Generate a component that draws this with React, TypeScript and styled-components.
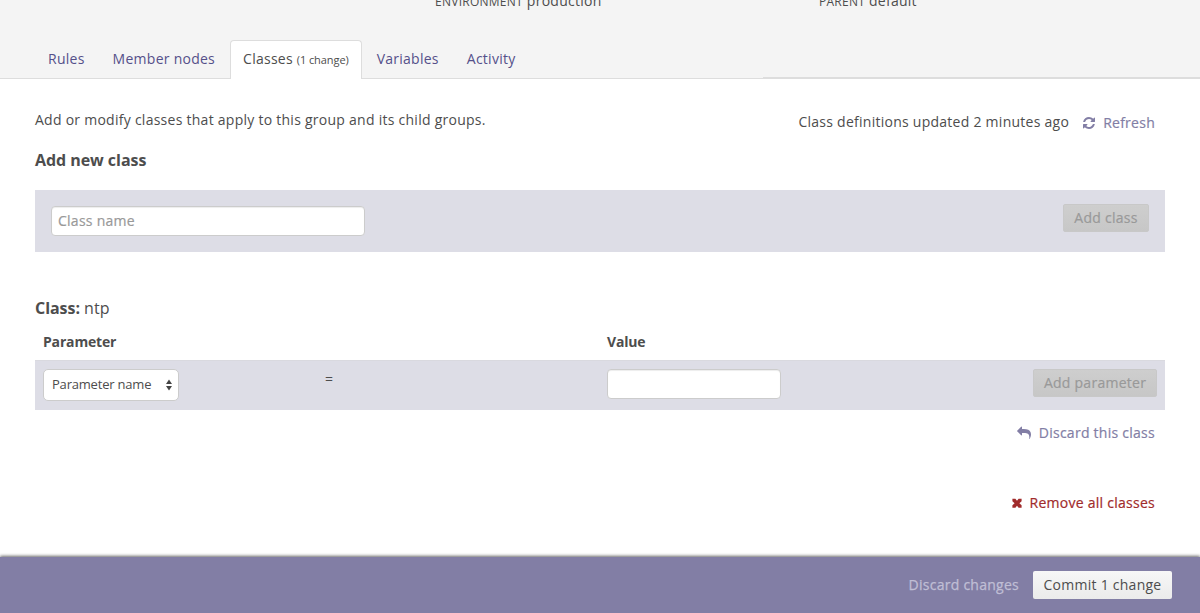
import React from 'react';
import styled, { createGlobalStyle } from 'styled-components';

const GlobalStyle = createGlobalStyle`
  * { box-sizing: border-box; }
  body {
    margin: 0;
    background: #fff;
    color: #4d4d4d;
    font-family: 'Open Sans', sans-serif;
    font-size: 14px;
    line-height: 20px;
    letter-spacing: 0.26px;
    overflow: hidden;
  }
  h2, h3, p { margin: 0; }
  button, input, select { font: inherit; letter-spacing: inherit; }
`;

const Page = styled.div`
  display: flex;
  flex-direction: column;
  height: 613px;
  overflow: hidden;
`;

const Header = styled.header`
  display: flex;
  flex-direction: column;
  height: 79px;
  flex: none;
  background: #f4f4f4;
`;

const Details = styled.div`
  display: grid;
  grid-template-columns: 384px 1fr;
  height: 40px;
  padding-left: 435px;
`;

const Detail = styled.div`
  margin-top: -9px;
`;

const DetailLabel = styled.span`
  font-size: 12px;
`;

const TabBar = styled.nav`
  display: flex;
  height: 39px;
  padding-left: 34px;
  box-shadow: inset 0 -1px #ddd;
`;

const Tab = styled.a<{ $active?: boolean }>`
  height: 39px;
  padding: ${p => (p.$active ? '8px 12px' : '9px 14px')};
  border: ${p => (p.$active ? '1px solid #ddd' : '0')};
  border-bottom: 0;
  border-radius: 4px 4px 0 0;
  background: ${p => (p.$active ? '#fff' : 'transparent')};
  color: ${p => (p.$active ? '#4d4d4d' : '#54508a')};
  margin-left: ${p => (p.$active ? '1px' : '0')};
  margin-right: ${p => (p.$active ? '1px' : '0')};
  white-space: nowrap;
`;

const TabNote = styled.span`
  font-size: 11px;
  letter-spacing: -0.08px;
`;

const TabRule = styled.div`
  align-self: flex-end;
  width: 437px;
  height: 2px;
  margin-left: auto;
  background: #ddd;
`;

const Main = styled.main`
  flex: 1;
  padding: 31px 35px 0;
`;

const Intro = styled.div`
  display: flex;
  justify-content: space-between;
  height: 40px;
`;

const Updated = styled.div`
  display: flex;
  padding: 2px 10px 0 0;
`;

const Action = styled.a<{ $danger?: boolean; $iconGap?: number }>`
  display: flex;
  align-items: center;
  height: 20px;
  color: ${p => (p.$danger ? '#a12b2b' : '#827ea5')};
  -webkit-text-stroke: 0.2px;
  svg { flex: none; margin-right: ${p => p.$iconGap ?? 7}px; }
`;

const RefreshAction = styled(Action)`
  margin: 1px 0 0 13px;
`;

const Title = styled.h2`
  font-size: 16px;
  line-height: 20px;
  font-weight: 700;
  letter-spacing: -0.05px;
`;

const Light = styled.span`
  font-weight: 400;
  letter-spacing: 0.1px;
`;

const AddClassPanel = styled.section`
  display: flex;
  justify-content: space-between;
  height: 62px;
  margin-top: 20px;
  padding: 14px 16px;
  background: #dddde6;
`;

const TextInput = styled.input<{ $width: number }>`
  width: ${p => p.$width}px;
  height: 30px;
  padding: 0 6px 2px;
  border: 1px solid #ccc;
  border-radius: 4px;
  background: #fff;
  box-shadow: inset 0 1px 1px rgba(0, 0, 0, 0.075);
  color: #4d4d4d;
  outline: none;
  &::placeholder { color: #999; opacity: 1; -webkit-text-stroke: 0.2px; }
`;

const ClassNameInput = styled(TextInput)`
  margin-top: 2px;
`;

const Button = styled.button<{ $width: number; $primary?: boolean }>`
  width: ${p => p.$width}px;
  height: 28px;
  padding: 0;
  border: ${p => (p.$primary ? '0' : '1px solid #c8c8c8')};
  border-radius: 2px;
  background: ${p => (p.$primary ? 'linear-gradient(#f7f7f7, #ebebeb)' : 'linear-gradient(#cecece, #c7c7c7)')};
  color: ${p => (p.$primary ? '#4d4d4d' : '#999')};
  -webkit-text-stroke: ${p => (p.$primary ? '0' : '0.2px')};
  white-space: nowrap;
`;

const ClassSection = styled.section`
  margin-top: 46px;
`;

const ColumnHeads = styled.div`
  display: grid;
  grid-template-columns: 564px 1fr;
  height: 42px;
  padding: 14px 8px 0;
  font-weight: 700;
  letter-spacing: -0.17px;
`;

const ParameterRow = styled.div`
  display: grid;
  grid-template-columns: 282px 282px 1fr auto;
  align-items: start;
  height: 50px;
  padding: 8px;
  border-top: 1px solid #d9d9df;
  background: #dddde6;
`;

const Select = styled.button`
  display: flex;
  align-items: center;
  justify-content: space-between;
  width: 136px;
  height: 32px;
  padding: 0 6px 2px 8px;
  border: 1px solid #ccc;
  border-radius: 5px;
  background: #fff;
  color: #4d4d4d;
  font-size: 13px;
  letter-spacing: -0.2px;
  white-space: nowrap;
  svg { margin-top: 2px; }
`;

const ActionRow = styled.div<{ $gap: number }>`
  display: flex;
  justify-content: flex-end;
  margin-top: ${p => p.$gap}px;
  padding-right: 10px;
`;

const Footer = styled.footer`
  display: flex;
  justify-content: flex-end;
  flex: none;
  height: 56px;
  padding: 14px 28px 0 0;
  background: #827ea5;
  box-shadow: 0 -1px 3px rgba(0, 0, 0, 0.6);
`;

const Discard = styled.a`
  margin: 4px 14px 0 0;
  color: #c0bed5;
  -webkit-text-stroke: 0.25px;
`;

const RefreshIcon = () => (
  <svg width="14" height="14" viewBox="0 0 1792 1792" fill="currentColor">
    <path d="M1639 1056q0 5-1 7-64 268-268 434.5t-478 166.5q-146 0-282.5-55t-243.5-157l-129 129q-19 19-45 19t-45-19-19-45v-448q0-26 19-45t45-19h448q26 0 45 19t19 45-19 45l-137 137q71 66 161 102t187 36q134 0 250-65t186-179q11-17 53-117 8-23 30-23h192q13 0 22.5 9.5t9.5 22.5zm25-800v448q0 26-19 45t-45 19h-448q-26 0-45-19t-19-45 19-45l138-138q-148-137-349-137-134 0-250 65t-186 179q-11 17-53 117-8 23-30 23h-199q-13 0-22.5-9.5t-9.5-22.5v-7q65-268 270-434.5t480-166.5q146 0 284 55.5t245 156.5l130-129q19-19 45-19t45 19 19 45z" />
  </svg>
);

const ReplyIcon = () => (
  <svg width="14" height="14" viewBox="0 0 1792 1792" fill="currentColor">
    <path d="M1792 1120q0 166-127 451-10 24-24 54t-13 22q-12 17-28 17-32 0-32-35 0-9 2.500-26.500t2.500-23.500q5-68 5-123C1578 1010 1400 896 864 896H640v256q0 26-19 45t-45 19-45-19L19 685q-19-19-19-45t19-45L531 83q19-19 45-19t45 19 19 45v256h224q713 0 875 403 53 134 53 333z" />
  </svg>
);

const RemoveIcon = () => (
  <svg width="12" height="12" viewBox="0 0 12 12" fill="currentColor">
    <path d="M1.400 1.700h3L6 3.700l1.600-2h3v2.500L8.400 6.200l2.200 2v2.500h-3L6 8.700l-1.600 2h-3V8.200l2.200-2-2.200-2z" />
  </svg>
);

const SortIcon = () => (
  <svg width="6" height="12" viewBox="0 0 6 12" fill="#444">
    <path d="M3 0.500 6 5H0zM0 7h6L3 11.500z" />
  </svg>
);

export default function App() {
  return (
    <Page>
      <GlobalStyle />
      <Header>
        <Details>
          <Detail><DetailLabel>ENVIRONMENT</DetailLabel> production</Detail>
          <Detail><DetailLabel>PARENT</DetailLabel> default</Detail>
        </Details>
        <TabBar>
          <Tab>Rules</Tab>
          <Tab>Member nodes</Tab>
          <Tab $active>Classes <TabNote>(1 change)</TabNote></Tab>
          <Tab>Variables</Tab>
          <Tab>Activity</Tab>
          <TabRule />
        </TabBar>
      </Header>
      <Main>
        <Intro>
          <p>Add or modify classes that apply to this group and its child groups.</p>
          <Updated>
            Class definitions updated 2 minutes ago
            <RefreshAction><RefreshIcon />Refresh</RefreshAction>
          </Updated>
        </Intro>
        <Title>Add new class</Title>
        <AddClassPanel>
          <ClassNameInput $width={314} placeholder="Class name" />
          <Button $width={86} disabled>Add class</Button>
        </AddClassPanel>
        <ClassSection>
          <Title>Class: <Light>ntp</Light></Title>
          <ColumnHeads><span>Parameter</span><span>Value</span></ColumnHeads>
          <ParameterRow>
            <Select>Parameter name<SortIcon /></Select>
            <span>=</span>
            <TextInput $width={174} />
            <Button $width={124} disabled>Add parameter</Button>
          </ParameterRow>
          <ActionRow $gap={13}><Action $iconGap={8}><ReplyIcon />Discard this class</Action></ActionRow>
          <ActionRow $gap={50}><Action $danger><RemoveIcon />Remove all classes</Action></ActionRow>
        </ClassSection>
      </Main>
      <Footer>
        <Discard>Discard changes</Discard>
        <Button $width={139} $primary>Commit 1 change</Button>
      </Footer>
    </Page>
  );
}
